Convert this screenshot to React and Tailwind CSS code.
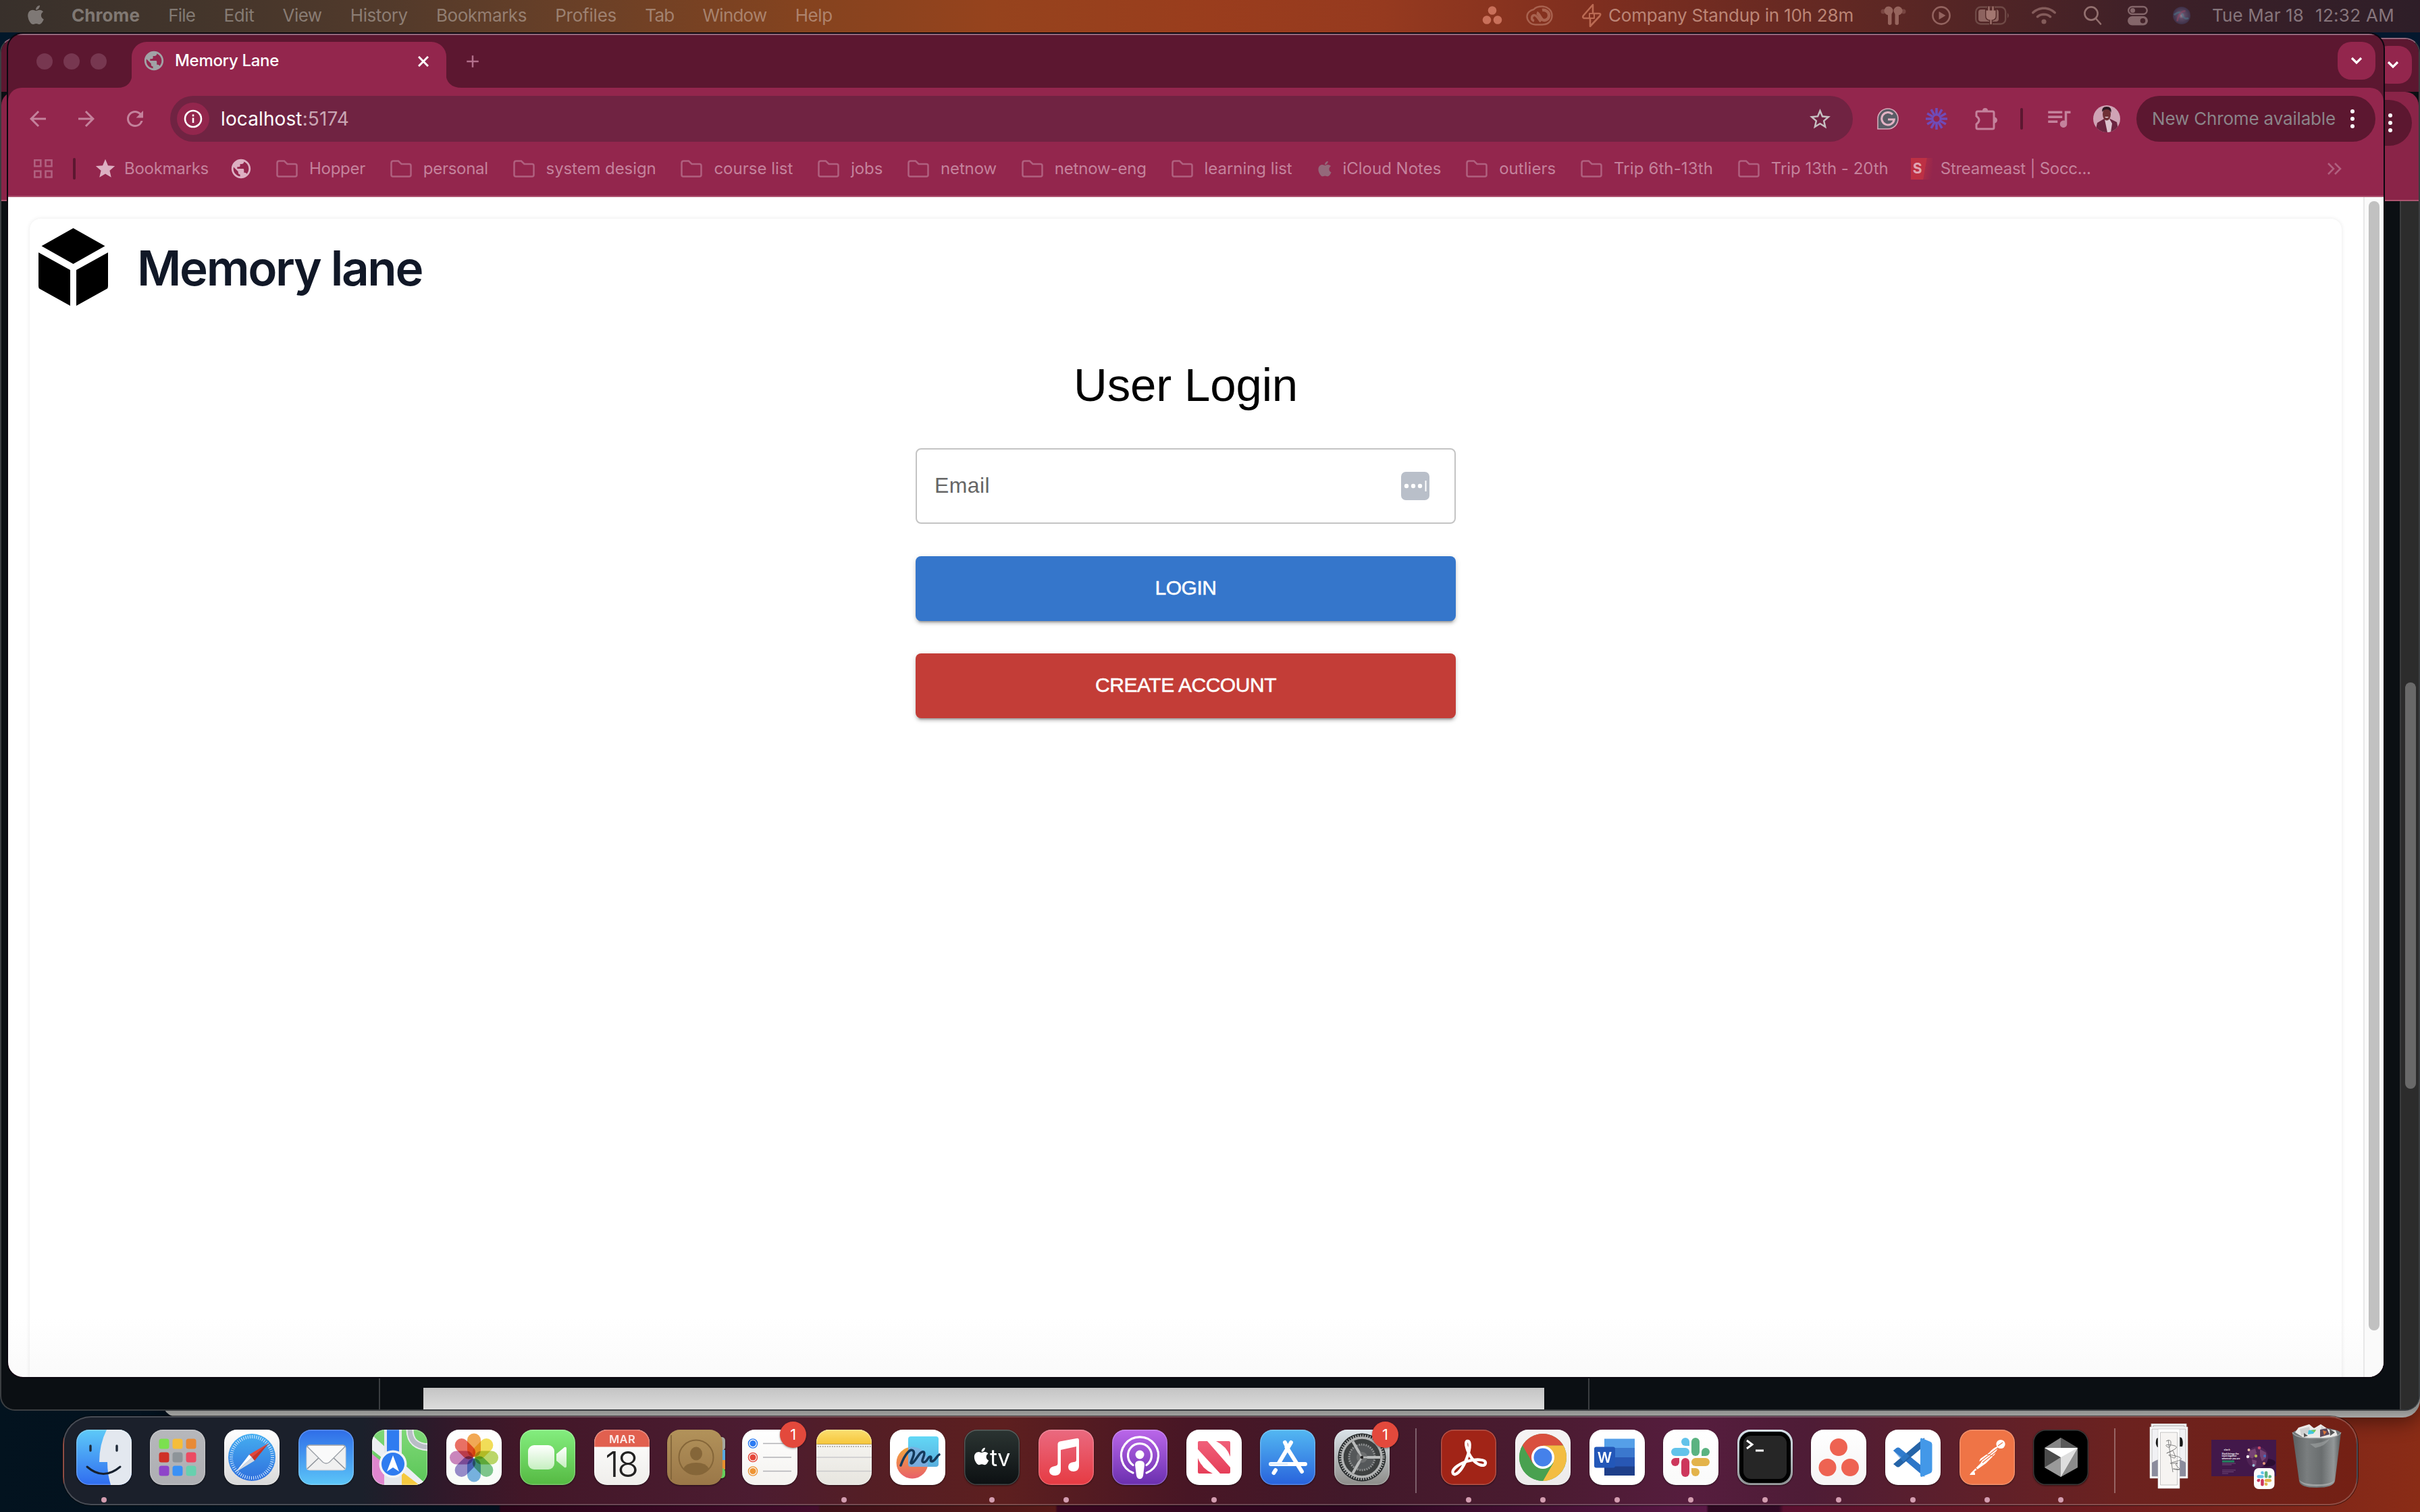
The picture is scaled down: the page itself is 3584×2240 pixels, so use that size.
import React, { useLayoutEffect, useRef, useState } from "react";
import { FaApple, FaWifi } from "react-icons/fa6";
import {
  MdPublic, MdStar, MdStarBorder, MdQueueMusic, MdArrowBack, MdArrowForward, MdRefresh, MdAdd,
} from "react-icons/md";

/* A line of text whose tracking is adjusted so that it fills a known width. */
function Fit({ w, className = "", children }) {
  const ref = useRef(null);
  const [ls, setLs] = useState(0);
  useLayoutEffect(() => {
    const natural = ref.current.getBoundingClientRect().width;
    setLs((w - natural) / ref.current.textContent.length);
  }, [w]);
  return (
    <span className="inline-block shrink-0 whitespace-pre" style={{ width: w }}>
      <span ref={ref} className={className} style={{ letterSpacing: ls }}>{children}</span>
    </span>
  );
}

/* ---------- menu bar ---------- */
const MENUS = [["File", 40], ["Edit", 45], ["View", 58], ["History", 85], ["Bookmarks", 134], ["Profiles", 91], ["Tab", 43], ["Window", 95], ["Help", 55]];

function MenuBar() {
  return (
    <div className="absolute left-0 top-0 flex h-[48px] w-[3584px] items-center bg-[linear-gradient(90deg,#38302b_0%,#43352b_8%,#523a2b_16%,#6a4027_24%,#84431f_33%,#96431d_41%,#9a3d1d_50%,#963a1f_57%,#7e2e1f_66%,#6a2a22_73%,#542525_81%,#3d2028_89%,#2e1e28_100%)] pb-[3px] text-[26px] leading-[30px] text-white/35">
      <FaApple className="ml-[38px] mt-[-2px] h-[32px] w-[30px]" />
      <div className="ml-[38px] flex items-center gap-[42.2px]">
        <Fit w={101} className="font-bold">Chrome</Fit>
        {MENUS.map(([t, w]) => <Fit key={t} w={w}>{t}</Fit>)}
      </div>
      <div className="ml-auto flex items-center">
        <svg className="mr-[20px] h-[28px] w-[30px]" viewBox="0 0 30 28" fill="#c9705a"><circle cx="15" cy="6.5" r="6.3" /><circle cx="7" cy="20.5" r="6.3" /><circle cx="23" cy="20.5" r="6.3" /></svg>
        <svg className="mr-[42px] ml-[15px] h-[30px] w-[40px]" viewBox="0 0 40 30" fill="none" stroke="#a9624f" strokeWidth="2.4">
          <path d="M14 28.500C6 28.500 1.500 22 1.500 16.500S6 7 11.500 6C14 3 19 1.500 24 1.500c8 0 14.500 6 14.500 13.500S33 28.500 24 28.500z" />
          <path d="M22 24c-3-3-6-10-10-9.500-4 .5-5 7 0 8.500" strokeWidth="3.500" />
          <path d="M16 11c3 1 5 7 8 10 3 2 9 1 10-5S29 6 24 7" strokeWidth="4.500" />
        </svg>
        <svg className="mr-[10px] h-[36px] w-[30px]" viewBox="0 0 30 36" fill="none" stroke="#bb6a53" strokeWidth="2.600" strokeLinejoin="round"><path d="M17 2 3 18q-2 3 1 4h9v12l14-15q3-4-1-4h-9z" /><path d="M12 22v-7h7v7z" strokeWidth="2" /></svg>
        <Fit w={363} className="text-[#bc8576]">Company Standup in 10h 28m</Fit>
        <svg className="ml-[40px] h-[30px] w-[38px]" viewBox="0 0 38 30" fill="#96645d"><circle cx="12" cy="8" r="6.500" /><circle cx="26" cy="8" r="6.500" /><rect x="11" y="9" width="5.500" height="20" rx="2.700" /><rect x="21.500" y="9" width="5.500" height="20" rx="2.700" /><circle cx="4" cy="9" r="3.500" opacity=".5" /><circle cx="34" cy="9" r="3.500" opacity=".5" /></svg>
        <svg className="ml-[37px] h-[30px] w-[30px]" viewBox="0 0 30 30"><circle cx="15" cy="15" r="12.600" fill="none" stroke="#93635f" strokeWidth="2.600" /><path d="M11.500 9v12l10-6z" fill="#93635f" /></svg>
        <svg className="ml-[35px] h-[30px] w-[52px]" viewBox="0 0 52 30"><rect x="1.200" y="2.500" width="44" height="25" rx="7" fill="none" stroke="#6f4946" strokeWidth="2.400" /><path d="M48 11q4 4 0 8z" fill="#6f4946" /><rect x="5" y="6" width="30" height="18" rx="4" fill="#8d635f" /><path d="M17.500 8.500h12v7q0 5-6 5t-6-5zM20.500 1.500v7M26.500 1.500v7M23.500 20v9" fill="#a37771" stroke="#542a29" strokeWidth="5" /><path d="M17.500 8.500h12v7q0 5-6 5t-6-5zM20.500 1.500v7M26.500 1.500v7M23.500 20v8" fill="#a37771" stroke="#a37771" strokeWidth="2.200" /></svg>
        <FaWifi className="ml-[32px] h-[34px] w-[36px] text-[#845c5b]" />
        <svg className="ml-[40px] h-[30px] w-[28px]" viewBox="0 0 28 30" fill="none" stroke="#93706f" strokeWidth="2.600" strokeLinecap="round"><circle cx="12" cy="12" r="9.600" /><path d="m19 19.500 7 8" /></svg>
        <svg className="ml-[38px] h-[30px] w-[30px]" viewBox="0 0 30 30"><rect x="1.200" y="2" width="27.500" height="11" rx="5.500" fill="none" stroke="#84666a" strokeWidth="2.400" /><circle cx="7.500" cy="7.500" r="3.600" fill="#84666a" /><rect x="0" y="16" width="30" height="13.500" rx="6.700" fill="#84666a" /><circle cx="22.500" cy="22.700" r="3.800" fill="#44232a" /></svg>
        <svg className="ml-[35px] h-[28px] w-[30px]" viewBox="0 0 30 30"><defs><radialGradient id="siri"><stop offset="0" stopColor="#9a8496" /><stop offset=".35" stopColor="#5e4c66" /><stop offset="1" stopColor="#3e3048" /></radialGradient></defs><circle cx="15" cy="15" r="14" fill="url(#siri)" /><path d="M3 14q10-8 13 0t10 5" stroke="#4b7286" strokeWidth="3" fill="none" opacity=".6" /><path d="M8 24q3-16 13-16" stroke="#8d4561" strokeWidth="3" fill="none" opacity=".6" /></svg>
        <div className="ml-[30px] mr-[38px] flex gap-[17px] text-[#86757b]"><Fit w={136}>Tue Mar 18</Fit><Fit w={117}>12:32 AM</Fit></div>
      </div>
    </div>
  );
}

/* ---------- browser ---------- */
const BOOKMARKS = [
  ["folder", "Hopper", 83], ["folder", "personal", 96], ["folder", "system design", 163], ["folder", "course list", 117],
  ["folder", "jobs", 47], ["folder", "netnow", 83], ["folder", "netnow-eng", 136], ["folder", "learning list", 130],
  ["apple", "iCloud Notes", 146], ["folder", "outliers", 84], ["folder", "Trip 6th-13th", 147], ["folder", "Trip 13th - 20th", 174],
];

function Folder() {
  return <svg className="mr-[17px] h-[26px] w-[32px] shrink-0" viewBox="0 0 32 26" fill="none" stroke="#b0607f" strokeWidth="2.500"><path d="M1.500 4.500q0-3 3-3h7.500l4.500 4.500h11.500q2.500 0 2.500 2.500v13.500q0 2.500-2.500 2.500H4q-2.500 0-2.500-2.500z" /></svg>;
}

function ChevronButton() {
  return <div className="flex h-[56px] w-[56px] items-center justify-center rounded-[20px] bg-[#93264d]"><svg className="h-[12px] w-[18px]" viewBox="0 0 18 12" fill="none" stroke="#fff" strokeWidth="3.200"><path d="m2 2 7 7 7-7" /></svg></div>;
}

function Dots() {
  return <div className="flex flex-col gap-[5px]"><i className="h-[6px] w-[6px] rounded-full bg-white" /><i className="h-[6px] w-[6px] rounded-full bg-white" /><i className="h-[6px] w-[6px] rounded-full bg-white" /></div>;
}

function TabStrip() {
  return (
    <div className="flex h-[78px] items-start pt-[10px]">
      <div className="ml-[42px] mt-[17px] flex gap-[16px]">
        <i className="h-[24px] w-[24px] rounded-full bg-[#773750]" /><i className="h-[24px] w-[24px] rounded-full bg-[#773750]" /><i className="h-[24px] w-[24px] rounded-full bg-[#773750]" />
      </div>
      <svg className="ml-[16px] h-[68px] w-[22px]" viewBox="0 0 22 68"><path d="M22 44v24H0Q22 68 22 44z" fill="#93264d" /></svg>
      <div className="-ml-px flex h-[68px] w-[466px] items-start rounded-t-[22px] bg-[#93264d] pt-[13px]">
        <MdPublic className="ml-[16px] mt-[-2px] h-[34px] w-[34px] text-[#a1a3a6]" />
        <div className="ml-[14px] text-[24px] leading-[30px] text-white"><Fit w={154} className="font-medium">Memory Lane</Fit></div>
        <svg className="ml-[206px] mt-[8px] h-[16px] w-[16px]" viewBox="0 0 16 16" stroke="#fff" strokeWidth="3"><path d="m1 1 14 14M15 1 1 15" /></svg>
      </div>
      <svg className="-ml-px h-[68px] w-[24px]" viewBox="0 0 24 68"><path d="M0 44v24h24Q0 68 0 44z" fill="#93264d" /></svg>
      <MdAdd className="ml-[1px] mt-[14px] h-[30px] w-[30px] text-[#b3708c]" />
      <div className="ml-auto mr-[12px]"><ChevronButton /></div>
    </div>
  );
}

function Toolbar() {
  return (
    <div className="flex h-[92px] items-center text-[#c4829c]">
      <MdArrowBack className="ml-[26px] h-[36px] w-[36px]" />
      <MdArrowForward className="ml-[36px] h-[36px] w-[36px]" />
      <MdRefresh className="ml-[36px] h-[36px] w-[36px]" />
      <div className="ml-[34px] flex h-[68px] w-[2492px] items-center rounded-full bg-[#702342]">
        <div className="ml-[10px] flex h-[48px] w-[48px] items-center justify-center rounded-full bg-[#93264d]">
          <svg className="h-[28px] w-[28px]" viewBox="0 0 28 28" fill="none" stroke="#fff" strokeWidth="2.600"><circle cx="14" cy="14" r="12" /><path d="M14 12.500V20M14 7.500v3" /></svg>
        </div>
        <div className="ml-[17px] text-[28px] leading-[34px]"><Fit w={190} className="text-white">localhost<span className="text-[#c9a5b3]">:5174</span></Fit></div>
        <MdStarBorder className="ml-auto mr-[30px] h-[37px] w-[37px] text-[#c6bfc1]" />
      </div>
      <svg className="ml-[36px] h-[32px] w-[32px]" viewBox="0 0 32 32"><path d="M1 31V16A15 15 0 1 1 16 31z" fill="#5a5c66" stroke="#d7a9ba" strokeWidth="1.600" /><path d="M23 9.500A9.300 9.300 0 1 0 25.300 17H16" fill="none" stroke="#e3b3c5" strokeWidth="3" /></svg>
      <svg className="ml-[40px] h-[32px] w-[32px]" viewBox="0 0 32 32" fill="none" stroke="#6f4bb8" strokeWidth="3.600"><circle cx="16" cy="16" r="6" strokeWidth="3" />
        {[0, 30, 60, 90, 120, 150, 180, 210, 240, 270, 300, 330].map((a) => <path key={a} d="M16 0v9" transform={`rotate(${a} 16 16)`} />)}
      </svg>
      <svg className="ml-[41px] h-[34px] w-[34px]" viewBox="0 0 34 34"><path d="M4 6h22q2 0 2 2v22q0 2-2 2H4q-2 0-2-2v-5q8-6 0-12V8q0-2 2-2z" fill="none" stroke="#c4829c" strokeWidth="3" /><path d="M11 5q0-4 4-4t4 4zM28 14q5 1 5 5t-5 5z" fill="#c4829c" /></svg>
      <i className="ml-[33px] h-[32px] w-[4px] rounded bg-[#5c1730]" />
      <MdQueueMusic className="ml-[32px] mt-[-2px] h-[42px] w-[42px]" />
      <svg className="ml-[30px] h-[40px] w-[40px]" viewBox="0 0 40 40"><defs><clipPath id="av"><circle cx="20" cy="20" r="20" /></clipPath></defs><g clipPath="url(#av)"><path fill="#cfa3b5" d="M0 0h40v40H0z" /><path d="M3 40 6 26l10-6h9l10 5 3 15z" fill="#6b2440" /><path d="m17 21 7-1 4 7-2 13h-5z" fill="#dcc3ce" /><ellipse cx="20" cy="13" rx="6" ry="9.500" fill="#6f2f35" /><path d="M13.500 10Q12 2 20 2t6.500 9q-2-5-6.500-5t-6.500 4z" fill="#2b1720" /><path d="M17 17q3 3 6 0z" fill="#e8d8dc" /></g></svg>
      <div className="ml-[24px] flex h-[68px] w-[354px] items-center rounded-full bg-[#5c1730]">
        <div className="ml-[23px] text-[26px] leading-[32px] text-[#8b8489]"><Fit w={272}>New Chrome available</Fit></div>
        <div className="ml-[22px]"><Dots /></div>
      </div>
    </div>
  );
}

function BookmarkBar() {
  return (
    <div className="flex h-[68px] items-center pb-[12px] text-[24px] leading-[30px] text-[#c4829c]">
      <svg className="ml-[38px] h-[28px] w-[28px]" viewBox="0 0 28 28" fill="none" stroke="#b0607f" strokeWidth="2.600"><path d="M1.300 1.300h9v9h-9zM17.500 1.300h9v9h-9zM1.300 17.500h9v9h-9zM17.500 17.500h9v9h-9z" /></svg>
      <i className="ml-[30px] h-[32px] w-[4px] rounded bg-[#5c1730]" />
      <MdStar className="ml-[27px] h-[34px] w-[34px] text-[#dcb0c2]" />
      <div className="ml-[11px]"><Fit w={125}>Bookmarks</Fit></div>
      <MdPublic className="ml-[31px] h-[34px] w-[34px] text-[#dcb0c2]" />
      <div className="ml-[35px] flex items-center gap-[36.8px]">
        {BOOKMARKS.map(([k, t, w]) => (
          <div key={t} className="flex items-center">
            {k === "folder" ? <Folder /> : <FaApple className="mr-[14px] h-[26px] w-[24px] text-[#94687a]" />}
            <Fit w={w}>{t}</Fit>
          </div>
        ))}
      </div>
      <div className="ml-[33px] flex h-[32px] w-[32px] items-center bg-[linear-gradient(100deg,#bd3044_62%,#a52b49_64%,#93264d_96%)] pl-[3px] text-[21px] font-bold text-[#e0a5b2]">S</div>
      <div className="ml-[12px]"><Fit w={223}>Streameast | Socc...</Fit></div>
      <svg className="ml-auto mr-[62px] h-[18px] w-[22px]" viewBox="0 0 22 18" fill="none" stroke="#b0607f" strokeWidth="2.600"><path d="m2 1 8 8-8 8M12 1l8 8-8 8" /></svg>
    </div>
  );
}

function LoginPage() {
  return (
    <div className="flex h-[1748px] bg-[linear-gradient(180deg,#fff_95%,#fafafa_100%)]">
      <div className="ml-[32px] mt-[32px] h-[1740px] w-[3424px] shrink-0 rounded-[16px] shadow-[0_0_6px_rgba(0,0,0,0.09)]">
        <div className="flex h-[146px] items-start">
          <svg className="ml-[13px] mt-[14px] h-[115px] w-[103px]" viewBox="0 0 103 115"><path d="M51.500 0 98.500 26.500 51.500 53 4.500 26.500zM0 36l47 26v53L2 90q-2-1-2-4zM103 36 56 62v53l45-25q2-1 2-4z" /></svg>
          <h1 className="ml-[43px] mt-[25px] text-[71px] leading-[96px] text-[#111827]"><Fit w={422} className="font-semibold">Memory lane</Fit></h1>
        </div>
        <div className="mx-auto flex w-[800px] flex-col items-center font-['Liberation_Sans',Arial,sans-serif]">
          <h2 className="mt-[61px] h-[133px] text-[69px] leading-[80px] text-black"><Fit w={332}>User Login</Fit></h2>
          <div className="flex h-[112px] w-[800px] items-center rounded-[8px] border-2 border-[#c4c4c4] px-[26px]">
            <div className="pb-[2px] text-[32px] leading-[40px] text-[#666]"><Fit w={82}>Email</Fit></div>
            <svg className="ml-auto mr-[11px] h-[42px] w-[42px]" viewBox="0 0 42 42"><rect width="42" height="42" rx="7" fill="#b9bfc9" /><g fill="#fff"><circle cx="8" cy="21" r="3.200" /><circle cx="18" cy="21" r="3.200" /><circle cx="28" cy="21" r="3.200" /><path d="M35.500 13h2v16h-2z" /></g></svg>
          </div>
          <button className="mt-[48px] flex h-[96px] w-[800px] items-center justify-center rounded-[8px] bg-[#3576cb] pb-[4px] text-[30px] text-white shadow-[0_6px_2px_-4px_rgba(0,0,0,0.2),0_4px_4px_rgba(0,0,0,0.14),0_2px_10px_rgba(0,0,0,0.12)]"><Fit w={91} className="[-webkit-text-stroke:0.5px_white]">LOGIN</Fit></button>
          <button className="mt-[48px] flex h-[96px] w-[800px] items-center justify-center rounded-[8px] bg-[#c33d37] pb-[4px] text-[30px] text-white shadow-[0_6px_2px_-4px_rgba(0,0,0,0.2),0_4px_4px_rgba(0,0,0,0.14),0_2px_10px_rgba(0,0,0,0.12)]"><Fit w={268} className="[-webkit-text-stroke:0.5px_white]">CREATE ACCOUNT</Fit></button>
        </div>
      </div>
      <div className="ml-auto flex w-[30px] shrink-0 border-l-2 border-[#e8e8e8] bg-[#fafafa] pl-[6px] pt-[6px]"><i className="h-[1673px] w-[16px] rounded-full bg-[#c1c1c1]" /></div>
    </div>
  );
}

function BrowserWindow() {
  return (
    <div className="absolute left-[12px] top-[50px] h-[1990px] w-[3518px] overflow-hidden rounded-[22px] bg-[#5c1730] shadow-[0_0_0_2px_#0b0710]">
      <div className="h-full border-t-2 border-[#93687b]">
        <TabStrip />
        <div className="h-[162px] rounded-t-[20px] border-b-2 border-[#ad5470] bg-[#93264d]"><Toolbar /><BookmarkBar /></div>
        <LoginPage />
      </div>
    </div>
  );
}

function BackWindow() {
  return (
    <div className="absolute left-0 top-[56px] flex h-[2034px] w-[3584px] flex-col overflow-hidden rounded-[22px] border-2 border-[#3b3e41] border-t-[#93687b] bg-[#0b0f13]">
      <div className="flex h-[78px] shrink-0 items-start justify-end bg-[#5c1730] pr-[10px] pt-[10px]"><ChevronButton /></div>
      <div className="flex h-[162px] shrink-0 items-start justify-end rounded-t-[20px] border-b-2 border-[#ad5470] bg-[#8a2448] pr-[10px] pt-[12px]">
        <div className="flex h-[68px] w-[80px] items-center justify-end rounded-full bg-[#5c1730] pr-[29px]"><Dots /></div>
      </div>
      <div className="flex grow items-stretch">
        <div className="w-[561px] border-r-2 border-[#3b3e41]" />
        <div className="flex w-[1791px] flex-col justify-end border-r-2 border-[#3b3e41] pl-[64px]"><div className="-mb-[2px] h-[34px] w-[1660px] bg-[linear-gradient(180deg,#c4c4c4,#dedede)]" /></div>
        <div className="ml-auto w-[28px] border-l-2 border-[#3b3c3d] bg-[#2c2c2c] pl-[6px] pt-[713px]"><div className="h-[602px] w-[16px] rounded-full bg-[#696969]" /></div>
      </div>
    </div>
  );
}

/* ---------- dock icons, each on an 82 unit square ---------- */
const G = ({ id, a, b }) => <linearGradient id={id} x1="0" y1="0" x2="0" y2="1"><stop offset="0" stopColor={a} /><stop offset="1" stopColor={b} /></linearGradient>;

function Tile({ id, a, b, children }) {
  return (
    <svg className="h-[82px] w-[82px] overflow-visible drop-shadow-[0_1px_1px_rgba(0,0,0,0.5)]" viewBox="0 0 82 82">
      <defs><G id={"t" + id} a={a} b={b || a} /><clipPath id={"c" + id}><rect width="82" height="82" rx="19" /></clipPath></defs>
      <g clipPath={`url(#c${id})`}><rect width="82" height="82" fill={`url(#t${id})`} />{children}</g>
      <rect x=".7" y=".7" width="80.600" height="80.600" rx="18.500" fill="none" stroke="#fff" strokeOpacity=".22" strokeWidth="1.400" />
    </svg>
  );
}

const Finder = () => <Tile id="fi" a="#5ecaf8" b="#2f6cf0"><path d="M45 0Q34 22 34 48h12q0 18 5 34h31V0z" fill="#e3e8ef" /><path d="M21 24v7M60 24v7" stroke="#1f2a38" strokeWidth="3.400" strokeLinecap="round" /><path d="M16 55q24 21 49 0" fill="none" stroke="#16202e" strokeWidth="3" strokeLinecap="round" /></Tile>;
const PADS = ["#7be04f", "#f5bd3a", "#e88a35", "#cf3027", "#8e9499", "#ec4b62", "#8e45c9", "#3a91f5", "#67d0ae"];
const Launchpad = () => <Tile id="lp" a="#b6b7bb" b="#aeafb3">{PADS.map((c, i) => <rect key={c} x={13.5 + (i % 3) * 20} y={13.500 + Math.floor(i / 3) * 20} width="15" height="15" rx="3.500" fill={c} />)}</Tile>;
const Safari = () => <Tile id="sa" a="#ffffff" b="#d8d8d8"><defs><G id="sab" a="#45aef0" b="#2f6fdd" /></defs><circle cx="41" cy="41" r="35" fill="url(#sab)" /><circle cx="41" cy="41" r="30.500" fill="none" stroke="#d8ecff" strokeWidth="5" strokeDasharray="1 2.190" /><path d="M66 20 37 37l4 4z" fill="#e5463a" /><path d="m66 20-21 26-4-5z" fill="#c93428" /><path d="m37 37 4 4-24 22z" fill="#fff" /><path d="m45 46-4-5-24 22z" fill="#d4dae2" /></Tile>;
const Mail = () => <Tile id="ma" a="#2f6de8" b="#5cc6f8"><rect x="12" y="23" width="58" height="37" rx="4" fill="#f0f0f0" stroke="#c8ccd2" /><path d="m13 58 20-19M69 58 49 39" stroke="#8f949b" strokeWidth="1.600" /><path d="M13 25q1-2 3-2h50q2 0 3 2L46 48q-5 4-10 0z" fill="#fafafa" stroke="#9a9fa6" strokeWidth="1.300" /></Tile>;
const Maps = () => <Tile id="mp" a="#7fd877" b="#5ac657"><path d="M0 36 30 60v22H0z" fill="#df86cf" /><path d="M0 16 82 82H66L0 30z" fill="#eceef2" /><path d="M0 8 90 90H66L0 26z" fill="#eceef2" /><path d="M44 62 70 82H44z" fill="#f5c93f" /><path d="M18 0h26v82H18z" fill="#e4e7ec" /><path d="M22 0h18v60H22z" fill="#2f7cf0" /><path d="M56 0q0 26 30 26" fill="none" stroke="#e9ebee" strokeWidth="11" /><path d="M56 0q0 26 30 26" fill="none" stroke="#b9bdc6" strokeWidth="7" /><circle cx="31" cy="51" r="20.500" fill="#f2f4f7" /><circle cx="31" cy="51" r="17" fill="#2f7cf0" /><path d="m31 38 9 24-9-6-9 6z" fill="#fff" /></Tile>;
const PETALS = ["#f19a37", "#f1d93b", "#b2d150", "#69bf7a", "#61a6df", "#8879c4", "#c472b4", "#e8574a"];
const Photos = () => <Tile id="ph" a="#ffffff" b="#f7fbf7">{PETALS.map((c, i) => <rect key={c} x="31" y="5.500" width="20" height="35" rx="10" fill={c} opacity=".85" className="mix-blend-multiply" transform={`rotate(${i * 45} 41 41.500)`} />)}</Tile>;
const FaceTime = () => <Tile id="ft" a="#84ee7f" b="#55b942"><defs><G id="ftb" a="#ffffff" b="#c6efc0" /></defs><rect x="12" y="23" width="39" height="36" rx="9" fill="url(#ftb)" /><path d="M54 36 66 26q3-1 3 2v26q0 3-3 2L54 46z" fill="url(#ftb)" /></Tile>;
const Calendar = () => <Tile id="ca" a="#ffffff" b="#efeeeb"><path d="M0 0h82v25.500H0z" fill="#e1604f" /><text x="41.500" y="20" textAnchor="middle" fontSize="16.500" fontWeight="600" fill="#fbe9e6" letterSpacing=".4">MAR</text><text x="40" y="69.500" textAnchor="middle" fontSize="52" fontWeight="300" fill="#222" letterSpacing="-2.500">18</text></Tile>;
const Contacts = () => (
  <svg className="h-[82px] w-[86px] drop-shadow-[0_1px_1px_rgba(0,0,0,0.5)]" viewBox="0 0 86 82"><defs><G id="co" a="#b2925a" b="#9a7748" /></defs>
    <rect x="70" y="11" width="16" height="20" rx="5" fill="#a7a9a0" /><rect x="70" y="30" width="16" height="16" fill="#59a9df" /><rect x="70" y="45" width="16" height="14" fill="#e8902f" /><rect x="70" y="57" width="16" height="15" rx="5" fill="#67cf5b" />
    <rect width="82" height="82" rx="19" fill="url(#co)" /><path d="M6 8v66" stroke="#7e6137" strokeWidth="1.600" /><circle cx="43" cy="41" r="25.500" fill="none" stroke="#856639" strokeWidth="2" /><ellipse cx="43" cy="35.500" rx="9" ry="10" fill="#856639" /><path d="M24 58q4-9 19-9t19 9q-7 8.500-19 8.500T24 58z" fill="#856639" /></svg>
);
const Reminders = () => <Tile id="re" a="#ffffff" b="#f4f2ef">{[["#2b7bf3", 20.500], ["#e5463a", 41], ["#ee9434", 61.500]].map(([c, y]) => <g key={c}><circle cx="16" cy={y} r="6.600" fill="none" stroke={c} strokeWidth="1.400" /><circle cx="16" cy={y} r="4.600" fill={c} /><path d={`M31 ${y}h42`} stroke="#b2b2b6" strokeWidth="1.500" /></g>)}</Tile>;
const Notes = () => <Tile id="no" a="#f9f8f5" b="#e7e5df"><defs><G id="nob" a="#fbdf71" b="#f6c63b" /></defs><path d="M0 0h82v21H0z" fill="url(#nob)" /><path d="M0 21.500h82" stroke="#b59a55" strokeWidth="1.200" /><path d="M2 25h80" stroke="#a9a59c" strokeWidth="2" strokeDasharray="1.500 2" /><path d="M0 41h82M0 61.500h82" stroke="#c9c9cb" strokeWidth="1.600" /></Tile>;
const Freeform = () => <Tile id="fr" a="#ffffff"><defs><G id="fra" a="#f3a63b" b="#e8606a" /><G id="frb" a="#62d8f6" b="#58aede" /><clipPath id="frc"><rect x="27" y="10" width="45" height="45" rx="4" /></clipPath></defs><circle cx="33" cy="49" r="23.500" fill="url(#fra)" /><rect x="27" y="10" width="45" height="45" rx="4" fill="url(#frb)" /><circle cx="33" cy="49" r="23.500" fill="#86a9dc" opacity=".7" clipPath="url(#frc)" /><path d="M16 53C22 36 31 26 35 32c3 6-7 18-3 18 5 0 12-20 18-17 4 3-5 13-1 15 6 2 7-9 11-8 3 1-2 7 2 7 5 0 7-8 11-10" fill="none" stroke="#143a5c" strokeWidth="3.600" strokeLinecap="round" /></Tile>;
const AppleTv = () => <Tile id="tv" a="#2b3432" b="#0c1012"><g transform="translate(11 25)"><FaApple size={29} color="#fff" /></g><text x="38" y="53.500" fontSize="34" fontWeight="400" fill="#fff" letterSpacing="-.5">tv</text></Tile>;
const Music = () => <Tile id="mu" a="#ea6a80" b="#e63a42"><path d="M28.500 21.500q0-3 3-4L56 13q4-1 4 3v38q0 7-8 8-8 0-8-7 0-6 8-7 4 0 4-3V25L33 30v30q0 7-8 8-8 0-9-6 0-7 8-8 4.500-.5 4.500-4z" fill="#fff" /></Tile>;
const Podcasts = () => <Tile id="po" a="#bb67ea" b="#6a2fae"><g fill="none" stroke="#fff" strokeWidth="3.200" strokeLinecap="round"><path d="M31 64A27.500 27.500 0 1 1 51 64" /><path d="M31 52.500A17.500 17.500 0 1 1 51 52.500" /></g><circle cx="41" cy="37" r="6.500" fill="#fff" /><path d="M34 52q0-6 7-6t7 6l-2 16q-1 5-5 5t-5-5z" fill="#fff" /></Tile>;
const News = () => <Tile id="ne" a="#ffffff"><defs><linearGradient id="neb" gradientUnits="userSpaceOnUse" x1="0" y1="17" x2="0" y2="65"><stop offset="0" stopColor="#f0607a" /><stop offset="1" stopColor="#e63e58" /></linearGradient></defs><path d="M19 17h12l34 39v7q0 2-2 2H50L17 29V19q0-2 2-2zM44 17h19q2 0 2 2v21Q60 25 44 17zM17 42q6 16 22 23H19q-2 0-2-2z" fill="url(#neb)" /></Tile>;
const AppStore = () => <Tile id="as" a="#53b8f2" b="#2862dc"><g stroke="#fff" strokeWidth="6" strokeLinecap="round"><path d="M37 19 41 27M46 19 27 51M39.500 26 62 62M16 51h51M23 60l-2.500 4" /></g><path d="M13 51h28" stroke="#dfeefd" strokeWidth="3" /></Tile>;
const Settings = () => (
  <Tile id="se" a="#dbe4ea" b="#8d8c89"><circle cx="41" cy="41" r="35.500" fill="#222627" /><circle cx="41" cy="41" r="32" fill="none" stroke="#a7a9a9" strokeWidth="4" strokeDasharray="1.800 1.800" /><circle cx="41" cy="41" r="29" fill="#3d4040" stroke="#b1b3b3" strokeWidth="3.400" /><circle cx="41" cy="41" r="19" fill="#55585a" stroke="#8d8f90" strokeWidth="3" strokeDasharray="2 1.500" /><path d="M41 41h27M41 41 27.500 17.500M41 41 27.500 64.500" stroke="#b9bbbb" strokeWidth="4" /><circle cx="41" cy="41" r="8" fill="#6d6f70" /><path d="M41 41h20M41 41 31 24M41 41 31 58" stroke="#b9bbbb" strokeWidth="2.500" /><circle cx="41" cy="41" r="2.200" fill="#222" /></Tile>
);
const Acrobat = () => <Tile id="ac" a="#a12417"><path d="M18 65c-3-5 6-13 20-18 14-4 28-3 28 2 0 7-12 4-19-5C39 34 34 17 39.500 17 45 17 43 32 36 48 29 63 21 69 18 65z" fill="none" stroke="#fff" strokeWidth="4.400" strokeLinejoin="round" /></Tile>;
const ChromeArt = () => <Tile id="ch" a="#f6f4f4" b="#eceaea"><circle cx="41" cy="41" r="35" fill="#49a150" /><path d="M10.700 23.500A35 35 0 0 1 71.300 23.500L41 24 25.500 50z" fill="#d9503f" /><path d="M71.300 23.500A35 35 0 0 1 41 76L56.500 49 41 23.500z" fill="#f3bd42" /><path d="M10.700 23.500A35 35 0 0 0 41 76L56 50H26z" fill="#49a150" /><circle cx="41" cy="41" r="17" fill="#fff" /><circle cx="41" cy="41" r="13.500" fill="#4581ea" /></Tile>;
const Word = () => <Tile id="wo" a="#ffffff"><path d="M22 13.500h45v14H22z" fill="#559fe8" /><path d="M22 27h45v14H22z" fill="#3b78ce" /><path d="M22 41h45v14H22z" fill="#2857b4" /><path d="M22 54.500h45V68H22z" fill="#1e3f8a" /><rect x="7" y="25.500" width="31" height="31" rx="3" fill="#2357b8" /><text x="22.500" y="49" textAnchor="middle" fontSize="21" fontWeight="600" fill="#fff">W</text></Tile>;
const SlackMark = () => <g><path d="M39 24h-6a6 6 0 1 1 6-6z" fill="#62c3ea" /><rect x="12" y="27" width="27" height="12" rx="6" fill="#62c3ea" /><rect x="42" y="12" width="12" height="27" rx="6" fill="#5bb381" /><path d="M57 39v-6a6 6 0 1 1 6 6z" fill="#5bb381" /><path d="M24 42v6a6 6 0 1 1-6-6z" fill="#cd375c" /><rect x="27" y="42" width="12" height="28" rx="6" fill="#cd375c" /><rect x="42" y="42" width="27" height="12" rx="6" fill="#e3b34b" /><path d="M42 57h6a6 6 0 1 1-6 6z" fill="#e3b34b" /></g>;
const Slack = () => <Tile id="sl" a="#ffffff" b="#fafafa"><SlackMark /></Tile>;
const Terminal = () => <Tile id="te" a="#d3e0e9" b="#85888a"><rect x="3" y="3" width="76" height="76" rx="17" fill="#000" /><rect x="9" y="9" width="64" height="64" rx="11" fill="#262626" /><path d="m14 16 8 6-8 6M27 31h12" fill="none" stroke="#fff" strokeWidth="3" /></Tile>;
const Asana = () => <Tile id="an" a="#ffffff" b="#f5f4f4"><circle cx="41" cy="26" r="13" fill="#ee6352" /><circle cx="24.500" cy="56" r="13" fill="#ee6352" /><circle cx="58" cy="56" r="13" fill="#ee6352" /></Tile>;
const VsCode = () => <Tile id="vs" a="#ffffff"><path d="m12 31 5-4q2-1 4 0l37 30v13z" fill="#2d76c8" /><path d="m12 51 5 4q2 1 4 0l37-31V12z" fill="#2564a8" /><path d="m12 31 5-4q2-1 4 0l15 12-9 9z" fill="#3382d4" opacity=".6" /><path d="M54 12.500 67 18q2.500 1 2.500 4v38q0 3-2.500 4.500L54 70q-2 0-2-2V14q0-2 2-1.500z" fill="#4398e8" /></Tile>;
const Postman = () => <Tile id="pm" a="#ef7446"><circle cx="61" cy="21.500" r="6.600" fill="#fff" /><path d="M56 25Q50 27 44 34l-13 9-2 4 5-2-3 5-14 14-2 3h8v-2l-1-3 17-12 13-13 5-10z" fill="#fff" /><path d="m31 47 26-20M34 49l24-19M40 36l12 4M24 57l4 4" stroke="#ef7446" strokeWidth="1.100" /><path d="m57 24 7-5" stroke="#ef7446" strokeWidth="1.200" /></Tile>;
const Cursor = () => <Tile id="cu" a="#000000"><path d="M41 12 66 27v29L41 70 17 56V27z" fill="#6b6b6b" /><path d="M41 12v15H17z" fill="#858585" /><path d="M41 12 66 27H41z" fill="#5a5a5a" /><path d="M17 27v29l24-15z" fill="#4b4b4b" /><path d="M17 56 41 41v29z" fill="#9a9a9a" /><path d="M66 56 41 70 66 27z" fill="#8c8c8c" /><path d="M66 27 41 70V41L17 27z" fill="#fff" /><path d="M66 27 41 70V41z" fill="#dedede" /></Tile>;

const LEFT = [
  [Finder, 1], [Launchpad], [Safari], [Mail], [Maps], [Photos], [FaceTime], [Calendar], [Contacts], [Reminders, 0, 1], [Notes, 1],
  [Freeform], [AppleTv, 1], [Music, 1], [Podcasts], [News, 1], [AppStore], [Settings, 0, 1],
];
const RIGHT = [[Acrobat, 1], [ChromeArt, 1], [Word, 1], [Slack, 1], [Terminal, 1], [Asana, 1], [VsCode, 1], [Postman, 1], [Cursor, 1]];

function Slot({ Art, open, badge }) {
  return (
    <div className="relative flex w-[109.6px] shrink-0 flex-col items-center pt-[18px]">
      <Art />
      {open ? <i className="mt-[18px] h-[8px] w-[8px] rounded-full bg-[#d39db0]" /> : null}
      {badge ? <div className="absolute left-[70px] top-[6px] flex h-[39px] w-[39px] items-center justify-center rounded-full bg-[#e3493c] text-[22px] text-white shadow-[0_1px_3px_rgba(0,0,0,0.4)]">1</div> : null}
    </div>
  );
}

function Documents() {
  return (
    <svg className="h-[98px] w-[60px]" viewBox="0 0 60 98"><path d="M3 0h52v20H3z" fill="#f5f5f5" stroke="#bbb" /><path d="M6 3h46v12H6z" fill="none" stroke="#aaa" /><path d="M1 5h56v76H1z" fill="#fbfbfb" stroke="#ccc" strokeWidth=".6" /><path d="M4 8h50v70H4z" fill="#f1f1f4" stroke="#b5b5b5" strokeWidth=".8" /><path d="M4 58q8-5 11-5h28q8 2 11 5v20H4z" fill="#8b8c9d" /><path d="M11 22q-3 7 1 13h3V20zM45 20v14h4q2-7-1-13z" fill="#161616" /><path d="M13 8h32v88H13z" fill="#fff" stroke="#ccc" strokeWidth=".6" /><path d="M16.500 13h25v78h-25z" fill="#f6f4f2" stroke="#b8b8b8" strokeWidth=".8" /><path d="M25 26q8-4 7 4t-6 4 8-2 0 8-6 3 7-3 3 7-6 2 7-1 1 8-5 3 6 0 2 6-4 3 6 0M28 24l7 48" fill="none" stroke="#777" strokeWidth=".9" /></svg>
  );
}

function SlackWindow() {
  return (
    <svg className="h-[76px] w-[96px]" viewBox="0 0 96 76"><path d="M0 2h96v54H0z" fill="#42184a" /><text x="18.500" y="17.500" fontSize="3.600" fontWeight="700" fill="#ddd">slack</text><g fill="#f4eef5" fontSize="3.200" fontWeight="700"><text x="15.500" y="23.500">Slack brings the</text><text x="15.500" y="27">team together</text><text x="15.500" y="30.500">wherever you are</text></g><path d="M16 32.500h18v3H16z" fill="#22835f" /><path d="M16 37h20M16 39h14M16 47h20M16 49.500h17M16 52h9" stroke="#7b5782" strokeWidth=".8" /><ellipse cx="82" cy="36" rx="13" ry="6" fill="#2b0d32" /><circle cx="68" cy="28" r="16" fill="#512456" /><path d="M57 18l8-3 2 7-6 8-6-3zM60 31l7 2-1 8-5-3zM72 16l9 5v8l-6 5-3-8z" fill="#754273" /><g><circle cx="55.500" cy="17" r="2" fill="#e8c0a5" /><circle cx="71" cy="14" r="2.300" fill="#c7496a" /><circle cx="54" cy="27" r="2.200" fill="#f3f3f3" /><circle cx="66" cy="26" r="2.200" fill="#b7b45a" /><circle cx="79" cy="26" r="2" fill="#436dc0" /><circle cx="78" cy="37" r="2" fill="#e59a7a" /><circle cx="62.500" cy="40" r="2" fill="#9dc6dd" /></g><rect x="63" y="44" width="30.500" height="31" rx="7" fill="#fbfbfb" /><g transform="translate(63 44) scale(.378)"><SlackMark /></g></svg>
  );
}

function Trash() {
  return (
    <svg className="h-[96px] w-[74px]" viewBox="0 0 74 96"><defs><linearGradient id="bin"><stop offset="0" stopColor="#5b5f60" /><stop offset=".3" stopColor="#7a7e7f" /><stop offset=".6" stopColor="#6a6e6f" /><stop offset=".85" stopColor="#939798" /><stop offset="1" stopColor="#56595a" /></linearGradient></defs><ellipse cx="37" cy="15" rx="36" ry="9" fill="#74787a" /><path d="M5 13 10 6l16-5 7 6 10-6 12 8 10 1 3 8-12 3H18z" fill="#eceae8" /><path d="m12 8 14-3 2 8-14 5zM44 3l8 8-10 6z" fill="#cfd0d0" /><path d="m25 10 11-1-4 6-8 1z" fill="#43c5dd" /><path d="m28 10 8-1-2 4z" fill="#78cd5a" /><path d="m42 9 10-2 4 9-14 4z" fill="#5b4658" /><path d="m46 10 6 2-4 5z" fill="#d8763b" /><path d="m56 8 8 5-7 5zM18 14l6 4-6 2z" fill="#555" /><path d="M1 13Q5 22 37 22t36-9l-9 72q-2 10-27 10T11 85z" fill="url(#bin)" /><path d="M1 13Q5 22 37 22t36-9" fill="none" stroke="#a4a8a9" strokeWidth="1.200" /><path d="M27 30q16 0 30-8-8 12-22 14z" fill="#a9adae" opacity=".5" /><path d="M11 83q3 10 26 10t26-9q-5 6-26 6T11 83z" fill="#b9bcbd" opacity=".6" /></svg>
  );
}

function Dock() {
  return (
    <div className="absolute left-[93px] top-[2098px] flex h-[132px] w-[3399px] rounded-[42px] border-2 border-white/20 bg-[linear-gradient(90deg,#1b202b_0%,#1b202b_13%,#30192a_16.500%,#421728_20%,#4c1c31_30%,#541e25_35%,#5d1f1f_41%,#481625_49%,#42192a_56%,#4a1b30_64%,#561d3e_71%,#4e1c36_76%,#5c1f2c_82%,#6c221f_90%,#742014_100%)] pl-[4px] shadow-[0_0_0_1px_rgba(0,0,0,0.5)]">
      {LEFT.map(([A, o, b], i) => <Slot key={i} Art={A} open={o} badge={b} />)}
      <i className="ml-[24px] mr-[23px] mt-[16px] h-[96px] w-[2px] shrink-0 bg-white/30" />
      {RIGHT.map(([A, o], i) => <Slot key={i} Art={A} open={o} />)}
      <i className="ml-[24px] mt-[16px] h-[96px] w-[2px] shrink-0 bg-white/30" />
      <div className="ml-[50px] mt-[9px]"><Documents /></div>
      <div className="ml-[32px] mt-[31px]"><SlackWindow /></div>
      <div className="ml-[23px] mt-[9px]"><Trash /></div>
    </div>
  );
}

export default function App() {
  return (
    <div className="relative h-[2240px] w-[3584px] overflow-hidden bg-[linear-gradient(90deg,#03131f_0%,#020f1d_20.600%,#2a0418_20.700%,#430c2c_33.800%,#3d1018_33.900%,#571a18_43.600%,#38061f_43.700%,#2c061f_56%,#5a1846_70.500%,#2d0820_70.600%,#300924_73.500%,#5a1030_73.700%,#6a1a20_85%,#8a2c16_100%)] font-[Inter,'Noto_Sans',sans-serif]">
      <div className="absolute left-0 top-0 h-[120px] w-full bg-[linear-gradient(90deg,#02182a_0%,#04141f_22.400%,#c77a2c_22.500%,#b8501e_50%,#9a3518_72%,#04182e_78%,#04182e_100%)]" />
      <div className="absolute left-[239px] top-[1800px] h-[300px] w-[3345px] rounded-[26px] bg-[linear-gradient(180deg,#8d8e8c_96%,#a5a5a4_100%)] shadow-[0_6px_30px_rgba(0,0,0,0.45)]" />
      <BackWindow />
      <BrowserWindow />
      <MenuBar />
      <Dock />
    </div>
  );
}
